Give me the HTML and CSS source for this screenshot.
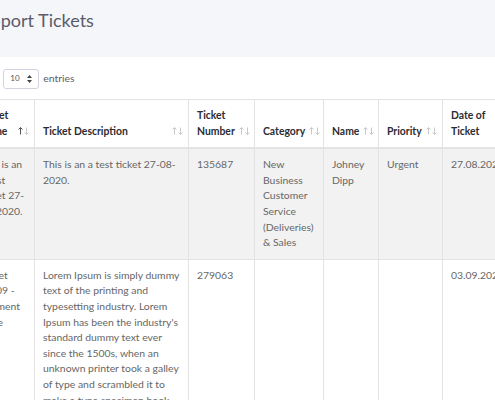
FILE: index.html
```html
<!DOCTYPE html>
<html>
<head>
<meta charset="utf-8">
<link rel="stylesheet" href="styles.css">
</head>
<body>
<div class="page">
  <header class="band">
    <h1 class="title">Support Tickets</h1>
  </header>
  <section class="card">
    <div class="length">
      <span>Show</span>
      <span class="select"><span class="sel-val">10</span>
        <svg class="sel-arrows" width="5" height="8" viewBox="0 0 5 8"><path d="M2.5 0 L5 3 L0 3 Z M2.5 8 L5 5 L0 5 Z" fill="#444"/></svg>
      </span>
      <span>entries</span>
    </div>
    <table class="tickets">
      <colgroup>
        <col class="c1"><col class="c2"><col class="c3"><col class="c4"><col class="c5"><col class="c6"><col class="c7">
      </colgroup>
      <thead>
        <tr>
          <th><div class="th-in"><span>Ticket Name</span><svg class="sort" width="11" height="8" viewBox="0 0 11 8"><path d="M2.5 0.5 V7.5 M0.5 2.5 L2.5 0.5 L4.5 2.5" stroke="#555" fill="none" stroke-width="1"/><path d="M8.5 0.5 V7.5 M6.5 5.5 L8.5 7.5 L10.5 5.5" stroke="#c8c8c8" fill="none" stroke-width="1"/></svg></div></th>
          <th><div class="th-in"><span>Ticket Description</span><svg class="sort" width="11" height="8" viewBox="0 0 11 8"><path d="M2.5 0.5 V7.5 M0.5 2.5 L2.5 0.5 L4.5 2.5" stroke="#c8c8c8" fill="none" stroke-width="1"/><path d="M8.5 0.5 V7.5 M6.5 5.5 L8.5 7.5 L10.5 5.5" stroke="#c8c8c8" fill="none" stroke-width="1"/></svg></div></th>
          <th><div class="th-in"><span>Ticket Number</span><svg class="sort" width="11" height="8" viewBox="0 0 11 8"><path d="M2.5 0.5 V7.5 M0.5 2.5 L2.5 0.5 L4.5 2.5" stroke="#c8c8c8" fill="none" stroke-width="1"/><path d="M8.5 0.5 V7.5 M6.5 5.5 L8.5 7.5 L10.5 5.5" stroke="#c8c8c8" fill="none" stroke-width="1"/></svg></div></th>
          <th><div class="th-in"><span>Category</span><svg class="sort" width="11" height="8" viewBox="0 0 11 8"><path d="M2.5 0.5 V7.5 M0.5 2.5 L2.5 0.5 L4.5 2.5" stroke="#c8c8c8" fill="none" stroke-width="1"/><path d="M8.5 0.5 V7.5 M6.5 5.5 L8.5 7.5 L10.5 5.5" stroke="#c8c8c8" fill="none" stroke-width="1"/></svg></div></th>
          <th><div class="th-in"><span>Name</span><svg class="sort" width="11" height="8" viewBox="0 0 11 8"><path d="M2.5 0.5 V7.5 M0.5 2.5 L2.5 0.5 L4.5 2.5" stroke="#c8c8c8" fill="none" stroke-width="1"/><path d="M8.5 0.5 V7.5 M6.5 5.5 L8.5 7.5 L10.5 5.5" stroke="#c8c8c8" fill="none" stroke-width="1"/></svg></div></th>
          <th><div class="th-in"><span>Priority</span><svg class="sort" width="11" height="8" viewBox="0 0 11 8"><path d="M2.5 0.5 V7.5 M0.5 2.5 L2.5 0.5 L4.5 2.5" stroke="#c8c8c8" fill="none" stroke-width="1"/><path d="M8.5 0.5 V7.5 M6.5 5.5 L8.5 7.5 L10.5 5.5" stroke="#c8c8c8" fill="none" stroke-width="1"/></svg></div></th>
          <th><div class="th-in"><span>Date of Ticket</span><svg class="sort" width="11" height="8" viewBox="0 0 11 8"><path d="M2.5 0.5 V7.5 M0.5 2.5 L2.5 0.5 L4.5 2.5" stroke="#c8c8c8" fill="none" stroke-width="1"/><path d="M8.5 0.5 V7.5 M6.5 5.5 L8.5 7.5 L10.5 5.5" stroke="#c8c8c8" fill="none" stroke-width="1"/></svg></div></th>
        </tr>
      </thead>
      <tbody>
        <tr class="odd">
          <td>This is an a test ticket 27-08-2020.</td>
          <td>This is an a test ticket 27-08-2020.</td>
          <td>135687</td>
          <td>New Business Customer Service (Deliveries) &amp; Sales</td>
          <td>Johney Dipp</td>
          <td>Urgent</td>
          <td>27.08.2020</td>
        </tr>
        <tr>
          <td>Ticket <span class="nowrap">03-09 -</span> Garment Issue</td>
          <td>Lorem Ipsum is simply dummy text of the printing and typesetting industry. Lorem Ipsum has been the industry's standard dummy text ever since the 1500s, when an unknown printer took a galley of type and scrambled it to make a type specimen book.</td>
          <td>279063</td>
          <td></td>
          <td></td>
          <td></td>
          <td>03.09.2020</td>
        </tr>
      </tbody>
    </table>
  </section>
</div>
</body>
</html>
```

FILE: styles.css
```css
html, body {
  margin: 0;
  padding: 0;
  background: #ffffff;
  overflow: hidden;
}
body {
  font-family: "Lato", "Liberation Sans", sans-serif;
  font-size: 10.4px;
  line-height: 15.6px;
  color: #666666;
}
.page {
  width: 495px;
  height: 400px;
  overflow: hidden;
}
.band {
  background: #f5f6fa;
  height: 57px;
  box-sizing: border-box;
  padding-top: 8px;
}
.title {
  margin: 0 0 0 -29px;
  font-size: 18px;
  line-height: 24px;
  font-weight: 400;
  color: #5a5c69;
  white-space: nowrap;
}
.card {
  padding-top: 12px;
}
.length {
  display: flex;
  align-items: center;
  gap: 4px;
  margin-left: -26px;
  height: 20px;
  color: #5a5c69;
}
.select {
  display: inline-flex;
  align-items: center;
  justify-content: space-between;
  box-sizing: border-box;
  width: 36px;
  height: 20px;
  border: 1px solid #d1d3e2;
  border-radius: 3px;
  padding: 0 6px 0 6px;
  font-size: 8px;
  color: #555;
  background: #fff;
}
.tickets {
  margin-top: 10px;
  margin-left: -29px;
  border-collapse: collapse;
  table-layout: fixed;
  width: 545px;
}
.c1 { width: 63px; }
.c2 { width: 154px; }
.c3 { width: 66px; }
.c4 { width: 69px; }
.c5 { width: 55px; }
.c6 { width: 64px; }
.c7 { width: 74px; }
.tickets th, .tickets td {
  border: 1px solid #e3e3e3;
  padding: 8px 5px 8px 8px;
  text-align: left;
}
.tickets th {
  vertical-align: bottom;
  color: #2b2c33;
  font-weight: 700;
  border-top: 1px solid #e3e3e3;
  border-bottom: 2px solid #e3e3e3;
}
.tickets td {
  vertical-align: top;
}
.nowrap {
  white-space: nowrap;
}
.th-in {
  display: flex;
  align-items: flex-end;
  justify-content: space-between;
  gap: 4px;
}
.sort {
  flex: none;
  margin-bottom: 4px;
}
.tickets tr.odd td {
  background: #f2f2f2;
}
```
